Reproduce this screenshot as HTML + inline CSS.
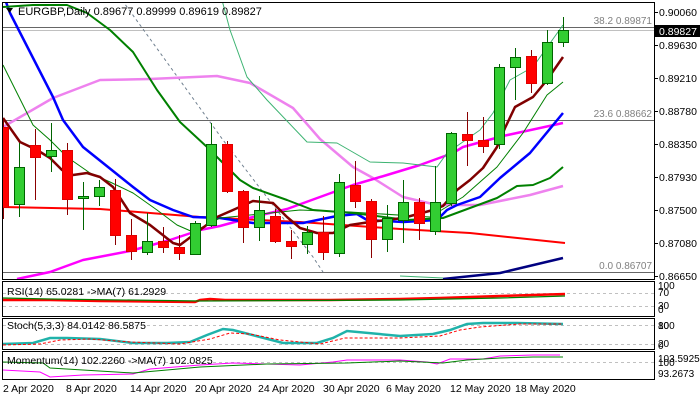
<!DOCTYPE html>
<html><head><meta charset="utf-8"><style>
html,body{margin:0;padding:0;background:#fff;width:700px;height:400px;overflow:hidden}
svg{display:block;font-family:"Liberation Sans",sans-serif}
</style></head><body>
<svg width="700" height="400" viewBox="0 0 700 400" xmlns="http://www.w3.org/2000/svg">
<rect width="700" height="400" fill="#fff"/>
<defs><clipPath id="mc"><rect x="3" y="3" width="651" height="276"/></clipPath></defs>
<!-- fib lines -->
<g stroke-width="1" shape-rendering="crispEdges">
<line x1="3" y1="27.5" x2="654" y2="27.5" stroke="#666"/>
<line x1="3" y1="30.5" x2="654" y2="30.5" stroke="#c0c0c0"/>
<line x1="3" y1="120.5" x2="654" y2="120.5" stroke="#666"/>
<line x1="3" y1="272.5" x2="654" y2="272.5" stroke="#666"/>
</g>
<g font-size="10" fill="#808080" text-anchor="end">
<text x="652" y="24">38.2 0.89871</text>
<text x="652" y="117">23.6 0.88662</text>
<text x="652" y="269">0.0 0.86707</text>
</g>
<g clip-path="url(#mc)" fill="none" stroke-linejoin="round">
<polyline stroke="#708090" stroke-dasharray="3,3" points="122,0 223,140 313,257 323,272"/>
<polyline stroke="#FF0000" stroke-width="2" points="2,207 100,209 200,217 300,222 400,229 470,233 565,243"/>
<polyline stroke="#EE82EE" stroke-width="2.5" points="3,127 53,98 100,80 150,79 217,76 250,83 293,108 320,139 353,167 373,178 403,197 437,205 460,205 480,205 530,195 563,186"/>
<polyline stroke="#FF00FF" stroke-width="2.5" points="17,279 50,272 83,260 130,251 170,240 200,230 220,226 253,217 287,209 320,197 353,185 387,175 420,165 453,153 463,147 503,136 563,123"/>
<polyline stroke="#0000FF" stroke-width="2.5" points="6,2 10,13 53,97 63,120 83,147 103,163 133,187 150,200 173,210 193,217 220,218 253,223 303,223 337,216 357,214 367,220 403,222 437,220 447,210 457,205 480,197 500,178 530,153 563,113"/>
<polyline stroke="#008000" stroke-width="2" points="3,7 33,5 67,5 87,13 110,30 133,52 157,90 180,122 207,147 240,180 253,188 287,200 313,210 353,213 407,220 443,218 470,208 497,198 517,186 533,185 550,178 563,167"/>
<polyline stroke="#008000" stroke-width="1" points="3,65 17,93 33,125 50,140 67,157 90,173 110,182 133,193 157,210 177,225 193,232 220,218 300,210 350,212 430,217 463,197 497,167 523,133 547,95 563,82"/>
<polyline stroke="#3CB371" stroke-width="1" points="222,0 230,30 247,77 267,100 307,142 337,143 370,162 403,163 437,167 447,153 480,130 493,113 510,80 533,67 563,25"/>
<polyline stroke="#800000" stroke-width="2.5" points="3,118 20,142 37,150 50,158 62,170 73,175 87,173 100,177 113,187 130,213 150,225 173,243 180,245 200,230 217,217 233,210 253,201 273,203 287,217 300,228 317,233 333,233 350,225 370,222 403,218 433,210 443,206 457,190 470,180 483,168 497,147 505,128 515,107 533,97 547,80 563,57"/>
<polyline stroke="#000080" stroke-width="2.5" points="443,279 500,273 563,258"/>
<polyline stroke="#3CB371" stroke-width="1" points="400,276 443,278"/>
</g>
<!-- candles -->
<g clip-path="url(#mc)" shape-rendering="crispEdges">
<g stroke="#006400" fill="#32CD32">
<line x1="19.5" y1="143" x2="19.5" y2="217"/><rect x="14.5" y="167.5" width="10" height="37"/>
<line x1="51.5" y1="123" x2="51.5" y2="172"/><rect x="46.5" y="150.5" width="10" height="6"/>
<line x1="83.5" y1="182" x2="83.5" y2="230"/><rect x="78.5" y="196.5" width="10" height="2"/>
<line x1="99.5" y1="180" x2="99.5" y2="206"/><rect x="94.5" y="187.5" width="10" height="9"/>
<line x1="147.5" y1="213" x2="147.5" y2="255"/><rect x="142.5" y="241.5" width="10" height="11"/>
<line x1="195.5" y1="221" x2="195.5" y2="255"/><rect x="190.5" y="223.5" width="10" height="31"/>
<line x1="211.5" y1="123" x2="211.5" y2="227"/><rect x="206.5" y="144.5" width="10" height="81"/>
<line x1="259.5" y1="196" x2="259.5" y2="241"/><rect x="254.5" y="210.5" width="10" height="17"/>
<line x1="307.5" y1="226" x2="307.5" y2="254"/><rect x="302.5" y="232.5" width="10" height="12"/>
<line x1="339.5" y1="174" x2="339.5" y2="257"/><rect x="334.5" y="182.5" width="10" height="71"/>
<line x1="387.5" y1="205" x2="387.5" y2="252"/><rect x="382.5" y="218.5" width="10" height="21"/>
<line x1="403.5" y1="180" x2="403.5" y2="243"/><rect x="398.5" y="202.5" width="10" height="18"/>
<line x1="435.5" y1="166" x2="435.5" y2="235"/><rect x="430.5" y="202.5" width="10" height="29"/>
<line x1="451.5" y1="132" x2="451.5" y2="206"/><rect x="446.5" y="133.5" width="10" height="70"/>
<line x1="499.5" y1="64" x2="499.5" y2="149"/><rect x="494.5" y="67.5" width="10" height="77"/>
<line x1="515.5" y1="48" x2="515.5" y2="100"/><rect x="510.5" y="57.5" width="10" height="10"/>
<line x1="547.5" y1="30" x2="547.5" y2="85"/><rect x="542.5" y="42.5" width="10" height="41"/>
<line x1="563.5" y1="17" x2="563.5" y2="47"/><rect x="558.5" y="30.5" width="10" height="12"/>
</g>
<g fill="#FF0000">
<g stroke="#8B0000">
<line x1="3.5" y1="120" x2="3.5" y2="219"/>
<line x1="35.5" y1="129" x2="35.5" y2="200"/>
<line x1="67.5" y1="143" x2="67.5" y2="215"/>
<line x1="115.5" y1="179" x2="115.5" y2="245"/>
<line x1="131.5" y1="219" x2="131.5" y2="260"/>
<line x1="163.5" y1="227" x2="163.5" y2="253"/>
<line x1="179.5" y1="235" x2="179.5" y2="260"/>
<line x1="227.5" y1="141" x2="227.5" y2="193"/>
<line x1="243.5" y1="190" x2="243.5" y2="243"/>
<line x1="275.5" y1="209" x2="275.5" y2="243"/>
<line x1="291.5" y1="230" x2="291.5" y2="259"/>
<line x1="323.5" y1="216" x2="323.5" y2="260"/>
<line x1="355.5" y1="161" x2="355.5" y2="208"/>
<line x1="371.5" y1="199" x2="371.5" y2="258"/>
<line x1="419.5" y1="198" x2="419.5" y2="240"/>
<line x1="467.5" y1="112" x2="467.5" y2="166"/>
<line x1="483.5" y1="117" x2="483.5" y2="153"/>
<line x1="531.5" y1="50" x2="531.5" y2="93"/>
</g>
<g stroke="#E00000">
<rect x="-1.5" y="127.5" width="10" height="80"/>
<rect x="30.5" y="145.5" width="10" height="12"/>
<rect x="62.5" y="150.5" width="10" height="49"/>
<rect x="110.5" y="190.5" width="10" height="45"/>
<rect x="126.5" y="235.5" width="10" height="16"/>
<rect x="158.5" y="241.5" width="10" height="6"/>
<rect x="174.5" y="247.5" width="10" height="6"/>
<rect x="222.5" y="144.5" width="10" height="47"/>
<rect x="238.5" y="191.5" width="10" height="36"/>
<rect x="270.5" y="216.5" width="10" height="25"/>
<rect x="286.5" y="241.5" width="10" height="5"/>
<rect x="318.5" y="232.5" width="10" height="20"/>
<rect x="350.5" y="185.5" width="10" height="16"/>
<rect x="366.5" y="201.5" width="10" height="38"/>
<rect x="414.5" y="202.5" width="10" height="21"/>
<rect x="462.5" y="134.5" width="10" height="6"/>
<rect x="478.5" y="140.5" width="10" height="6"/>
<rect x="526.5" y="56.5" width="10" height="27"/>
</g>
</g>
</g>
<!-- frames -->
<g fill="none" stroke="#000" shape-rendering="crispEdges">
<rect x="2.5" y="2.5" width="652" height="277"/>
<rect x="2.5" y="281.5" width="652" height="35"/>
<rect x="2.5" y="318.5" width="652" height="31"/>
<rect x="2.5" y="351.5" width="652" height="28"/>
</g>
<text x="18" y="15" font-size="11" fill="#000">EURGBP,Daily  0.89677 0.89999 0.89619 0.89827</text>
<path d="M6,8 L13,8 L9.5,13 Z" fill="#000"/>
<!-- price scale -->
<g font-size="10.5" fill="#000">
<text x="659" y="16">0.90060</text>
<text x="659" y="49">0.89630</text>
<text x="659" y="82">0.89210</text>
<text x="659" y="115">0.88780</text>
<text x="659" y="148">0.88350</text>
<text x="659" y="181">0.87930</text>
<text x="659" y="214">0.87500</text>
<text x="659" y="247">0.87080</text>
<text x="659" y="280">0.86650</text>
</g>
<g stroke="#000" shape-rendering="crispEdges">
<line x1="655" y1="12.5" x2="658" y2="12.5"/><line x1="655" y1="45.5" x2="658" y2="45.5"/><line x1="655" y1="78.5" x2="658" y2="78.5"/><line x1="655" y1="111.5" x2="658" y2="111.5"/><line x1="655" y1="144.5" x2="658" y2="144.5"/><line x1="655" y1="177.5" x2="658" y2="177.5"/><line x1="655" y1="210.5" x2="658" y2="210.5"/><line x1="655" y1="243.5" x2="658" y2="243.5"/><line x1="655" y1="276.5" x2="658" y2="276.5"/>
</g>
<rect x="655" y="25" width="45" height="12" fill="#000"/>
<text x="659" y="35" font-size="10.5" fill="#fff">0.89827</text>
<!-- RSI -->
<g stroke="#c0c0c0" stroke-dasharray="3,3" shape-rendering="crispEdges">
<line x1="3" y1="293.5" x2="654" y2="293.5"/><line x1="3" y1="306.5" x2="654" y2="306.5"/>
<line x1="3" y1="325.5" x2="654" y2="325.5"/><line x1="3" y1="344.5" x2="654" y2="344.5"/>
<line x1="3" y1="362.5" x2="654" y2="362.5"/>
</g>
<g fill="none">
<polyline stroke="#FF0000" stroke-width="2.5" points="3,300 50,300 100,301 195,302 200,300 210,299 225,300 330,300 400,299 440,298 500,296 565,294"/>
<polyline stroke="#008000" stroke-width="1.2" points="3,298 50,299 200,301 400,300 500,298 565,296"/>
<polyline stroke="#20B2AA" stroke-width="2.5" points="3,344 33,343 50,338 67,338 100,339 133,343 167,343 190,342 207,335 223,329 233,330 260,337 283,343 317,343 333,338 347,331 400,336 433,334 450,330 467,324 483,323 517,323 563,324"/>
<polyline stroke="#FF0000" stroke-width="1" stroke-dasharray="3,2" points="3,345 40,344 60,340 90,339 130,342 180,344 210,339 230,333 250,334 280,340 320,344 345,338 400,338 440,336 460,330 480,327 520,324 563,324"/>
<polyline stroke="#FF00FF" stroke-width="1" points="3,370 40,372 50,377 83,375 133,374 150,369 200,365 233,363 300,365 333,362 347,360 400,360 427,362 437,364 450,359 483,359 500,356 533,355 560,355"/>
<polyline stroke="#008000" stroke-width="1" points="3,362 43,363 50,368 83,370 133,373 167,370 200,367 267,364 347,363 400,361 443,363 467,360 500,358 533,357 563,357"/>
</g>
<g font-size="10.5" fill="#000">
<text x="7" y="295">RSI(14) 65.0281  -&gt;MA(7) 61.2929</text>
<text x="7" y="329">Stoch(5,3,3) 84.0142 86.5875</text>
<text x="7" y="364">Momentum(14) 102.2260  -&gt;MA(7) 102.0825</text>
</g>
<g font-size="10" fill="#000">
<text x="658" y="289">100</text><text x="658" y="296">70</text>
<text x="658" y="309">30</text><text x="658" y="313">0</text>
<text x="658" y="329">100</text><text x="658" y="329">80</text>
<text x="658" y="347">20</text><text x="658" y="349">0</text>
<text x="658" y="362">103.5925</text><text x="658" y="366">100</text>
<text x="658" y="377">93.2673</text>
</g>
<g font-size="10.5" fill="#000">
<text x="3" y="392">2 Apr 2020</text>
<text x="66" y="392">8 Apr 2020</text>
<text x="130" y="392">14 Apr 2020</text>
<text x="195" y="392">20 Apr 2020</text>
<text x="258" y="392">24 Apr 2020</text>
<text x="323" y="392">30 Apr 2020</text>
<text x="386" y="392">6 May 2020</text>
<text x="450" y="392">12 May 2020</text>
<text x="515" y="392">18 May 2020</text>
</g>
</svg>
</body></html>
